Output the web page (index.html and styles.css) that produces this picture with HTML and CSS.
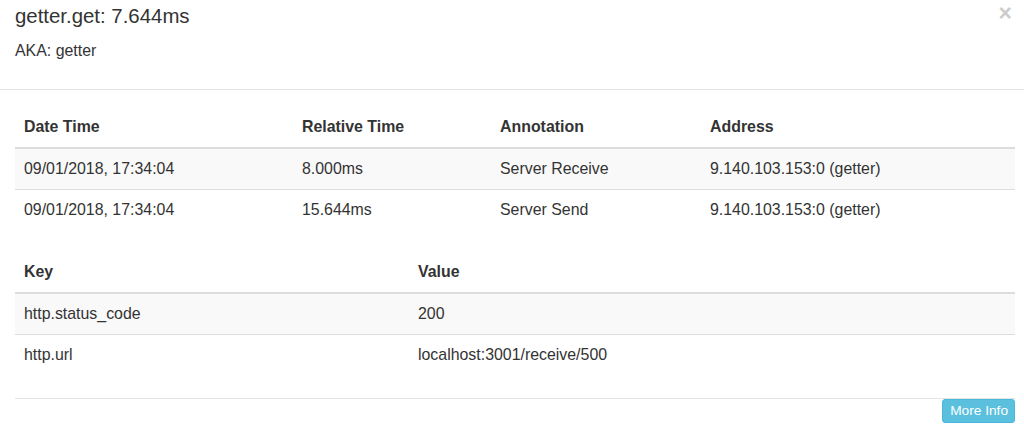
FILE: index.html
```html
<!DOCTYPE html>
<html>
<head>
<meta charset="utf-8">
<link rel="stylesheet" href="styles.css">
</head>
<body>
<div class="modal">
  <div class="modal-header">
    <button class="close" type="button">×</button>
    <h4 class="modal-title">getter.get: 7.644ms</h4>
    <h5 class="aka">AKA: getter</h5>
  </div>
  <div class="modal-body">
    <table class="table table-striped">
      <colgroup>
        <col class="c1"><col class="c2"><col class="c3"><col class="c4">
      </colgroup>
      <thead>
        <tr><th>Date Time</th><th>Relative Time</th><th>Annotation</th><th>Address</th></tr>
      </thead>
      <tbody>
        <tr><td>09/01/2018, 17:34:04</td><td>8.000ms</td><td>Server Receive</td><td>9.140.103.153:0 (getter)</td></tr>
        <tr><td>09/01/2018, 17:34:04</td><td>15.644ms</td><td>Server Send</td><td>9.140.103.153:0 (getter)</td></tr>
      </tbody>
    </table>
    <table class="table table-striped last">
      <colgroup>
        <col class="k1"><col class="k2">
      </colgroup>
      <thead>
        <tr><th>Key</th><th>Value</th></tr>
      </thead>
      <tbody>
        <tr><td>http.status_code</td><td>200</td></tr>
        <tr><td>http.url</td><td>localhost:3001/receive/500</td></tr>
      </tbody>
    </table>
    <div class="modal-footer">
      <button class="btn btn-info" type="button">More Info</button>
    </div>
  </div>
</div>
</body>
</html>
```
FILE: styles.css
```css
html, body {
  margin: 0;
  padding: 0;
  background: #fff;
}
body {
  font-family: "Liberation Sans", Arial, sans-serif;
  font-size: 15.9px;
  line-height: 22px;
  color: #333;
}
.modal {
  width: 1024px;
  height: 428px;
  overflow: hidden;
}
.modal-header {
  padding: 2px 15px 0 15px;
  height: 87px;
  border-bottom: 1px solid #e5e5e5;
}
.close {
  float: right;
  margin: 0 -3px 0 0;
  padding: 0;
  border: 0;
  background: transparent;
  font-family: "Liberation Sans", Arial, sans-serif;
  font-size: 23px;
  font-weight: bold;
  line-height: 1;
  color: #000;
  opacity: 0.2;
  text-shadow: 0 1px 0 #fff;
}
.modal-title {
  margin: 0;
  font-size: 20.4px;
  font-weight: 500;
  line-height: 28px;
}
.aka {
  margin: 10px 0 0 0;
  font-size: 15.9px;
  font-weight: normal;
  line-height: 22px;
}
.modal-body {
  padding: 17px 9px 0 15px;
}
.table {
  width: 1000px;
  border-collapse: collapse;
  border-spacing: 0;
  margin-bottom: 22px;
}
.table.last {
  margin-bottom: 23px;
}
.table th,
.table td {
  padding: 9px 9px 9px 9px;
  text-align: left;
  vertical-align: top;
  line-height: 22px;
}
.table th {
  font-weight: bold;
  border-bottom: 2px solid #ddd;
}
.table tbody td {
  border-top: 1px solid #ddd;
}
.table thead tr:first-child th {
  border-top: 0;
}
.table-striped tbody tr:nth-child(odd) {
  background: #f9f9f9;
}
.c1 { width: 278px; }
.c2 { width: 198px; }
.c3 { width: 210px; }
.c4 { width: 314px; }
.k1 { width: 394px; }
.k2 { width: 606px; }
.modal-footer {
  width: 1000px;
  border-top: 1px solid #e5e5e5;
  display: flex;
  justify-content: flex-end;
  padding-top: 0;
}
.btn {
  font-family: "Liberation Sans", Arial, sans-serif;
  font-size: 13.7px;
  line-height: 20px;
  padding: 1px 6px 1px 7px;
  border: 1px solid #46b8da;
  border-radius: 3px;
  background: #5bc0de;
  color: #fff;
  margin: 0;
}
```
